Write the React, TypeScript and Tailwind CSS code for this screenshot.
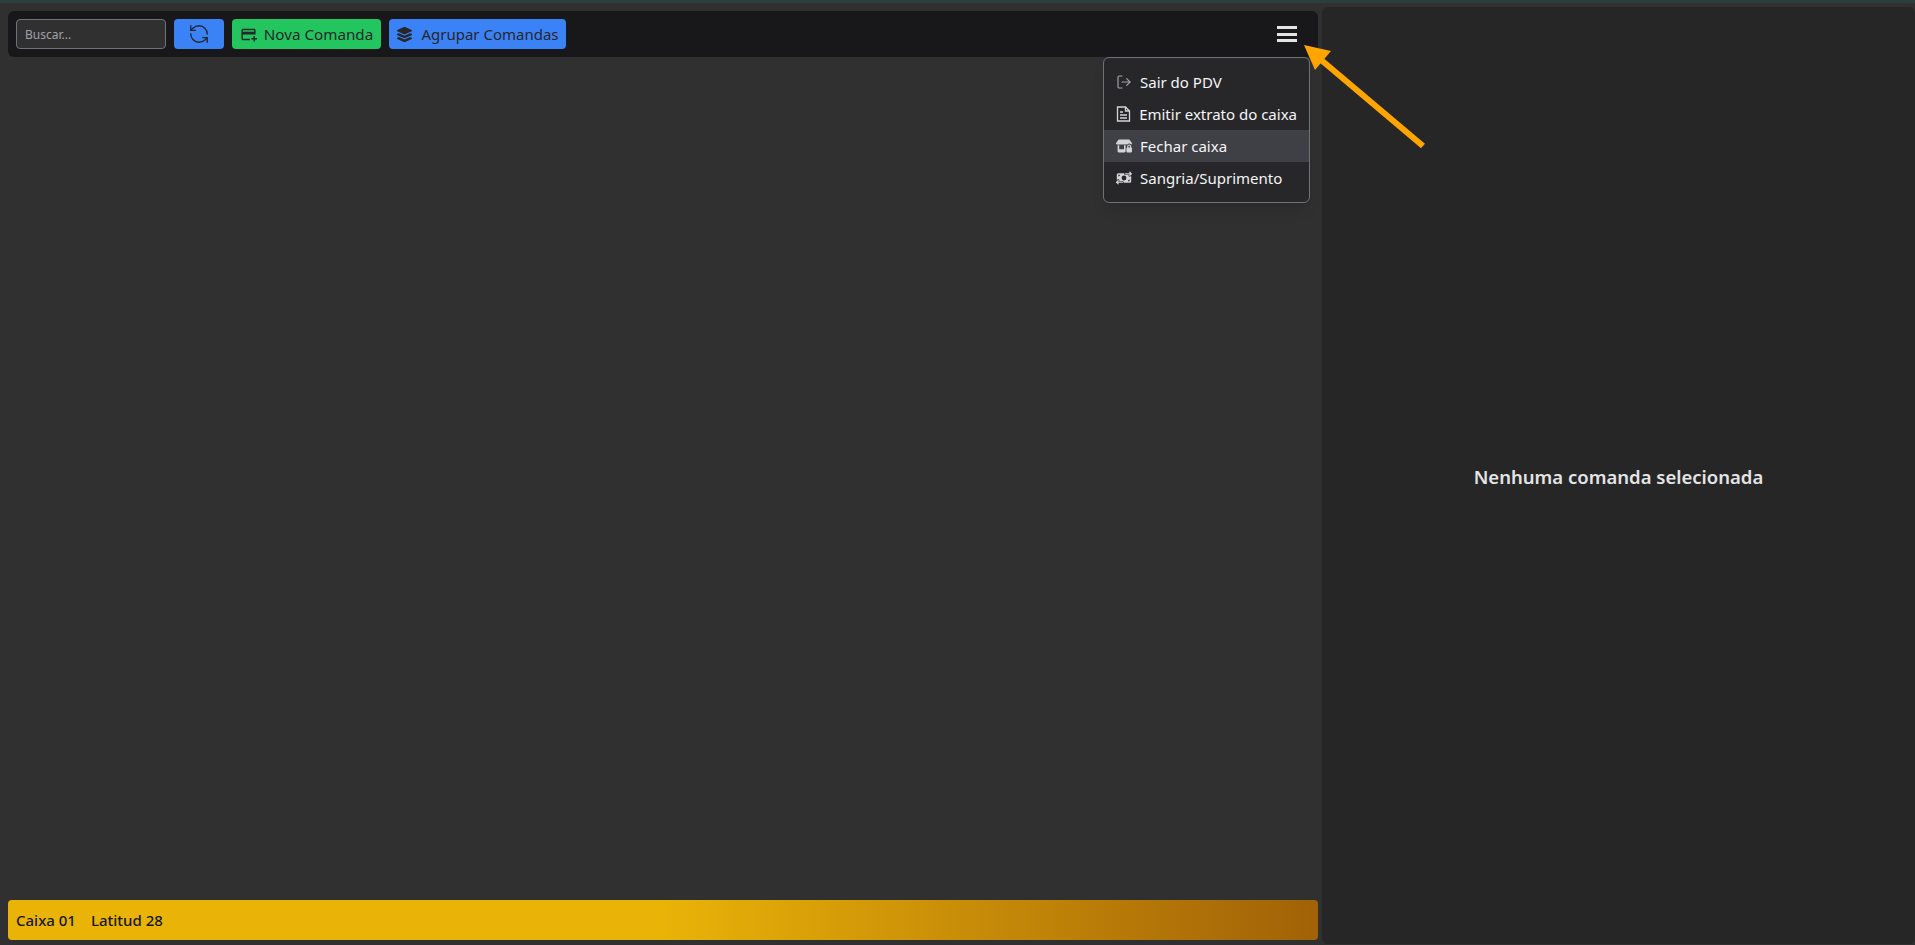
import { FaLayerGroup, FaMoneyBillTransfer, FaShopLock } from 'react-icons/fa6'
import { MdAddCard } from 'react-icons/md'
import { LogOut, RefreshCcw } from 'lucide-react'

const font = "font-['Noto_Sans','Open_Sans',sans-serif]"

function FileIcon() {
  return (
    <svg width="15" height="16" viewBox="0 0 15 16" fill="none" stroke="currentColor" strokeWidth="1.3">
      <path d="M1.5 1h8l4 4v10h-12z" />
      <path d="M9.5 1v4h4" />
      <path d="M4 6h3M4 9h7M4 12h7" strokeWidth="1.5" />
    </svg>
  )
}

function MenuItem({ icon, label, active }: { icon: React.ReactNode; label: string; active?: boolean }) {
  return (
    <div className={`flex h-8 items-center gap-2 whitespace-nowrap px-3 text-[15px] text-[#f4f4f5] ${active ? 'bg-[#3f3f46]' : ''}`}>
      <span className="flex w-4 justify-center text-[#d4d4d8]">{icon}</span>
      {label}
    </div>
  )
}

export default function App() {
  return (
    <div className={`flex h-[945px] w-[1915px] flex-col overflow-hidden bg-[#303030] ${font}`}>
      <div className="h-[3px] shrink-0 bg-[#2b3d3d]" />
      <div className="flex min-h-0 flex-1">
        <div className="flex w-[1322px] flex-col pb-[5px] pl-2 pr-1 pt-2">
          <div className="relative flex h-[46px] items-center gap-2 rounded-md bg-[#18181b] px-2">
            <input
              placeholder="Buscar..."
              className="h-[30px] w-[150px] rounded border border-[#71717a] bg-[#303030] px-2 text-xs text-[#d4d4d8] placeholder:text-[#a1a1aa]"
            />
            <button className="flex h-[30px] w-[50px] items-center justify-center rounded bg-[#3b82f6] text-[#27272a]">
              <RefreshCcw size={22} strokeWidth={1.5} />
            </button>
            <button className="flex h-[30px] w-[149px] items-center justify-center gap-[7px] rounded bg-[#22c55e] text-[15.2px] text-[#27272a]">
              <MdAddCard size={17} />
              Nova Comanda
            </button>
            <button className="flex h-[30px] w-[177px] items-center justify-center gap-2 rounded bg-[#3b82f6] text-[15px] text-[#27272a]">
              <FaLayerGroup size={17} />
              Agrupar Comandas
            </button>
            <div className="ml-auto mr-[13px] flex h-4 w-5 flex-col justify-between">
              <div className="h-[3px] bg-[#e4e4e7]" />
              <div className="h-[3px] bg-[#e4e4e7]" />
              <div className="h-[3px] bg-[#e4e4e7]" />
            </div>
            <div className="absolute left-[1095px] top-[46px] z-10 w-[207px] rounded-md border border-[#71717a] bg-[#27272a] py-2 shadow-lg">
              <MenuItem icon={<LogOut size={16} strokeWidth={1.75} className="text-[#a1a1aa]" />} label="Sair do PDV" />
              <MenuItem icon={<FileIcon />} label="Emitir extrato do caixa" />
              <MenuItem icon={<FaShopLock size={16} />} label="Fechar caixa" active />
              <MenuItem icon={<FaMoneyBillTransfer size={16} />} label="Sangria/Suprimento" />
            </div>
          </div>
          <div className="flex-1" />
          <div className="flex h-10 items-center gap-[15px] rounded bg-gradient-to-r from-[#eab308] from-50% to-[#a16207] px-2 text-[15px] font-medium text-[#18181b]">
            <span>Caixa 01</span>
            <span>Latitud 28</span>
          </div>
        </div>
        <div className="mb-px mt-1 flex flex-1 items-center justify-center rounded-md bg-[#262626] pt-[2px] text-[18.5px] font-semibold text-[#e4e4e7]">
          Nenhuma comanda selecionada
        </div>
      </div>
      <svg className="pointer-events-none absolute left-[1290px] top-[35px]" width="150" height="125" viewBox="1290 35 150 125">
        <line x1="1423" y1="146" x2="1320" y2="59" stroke="#ffa500" strokeWidth="6" />
        <polygon points="1304,45 1331,51 1315,70" fill="#ffa500" />
      </svg>
    </div>
  )
}
